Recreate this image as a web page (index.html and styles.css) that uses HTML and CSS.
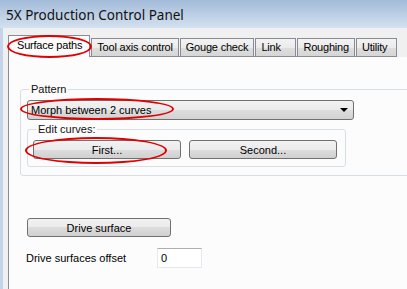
FILE: index.html
```html
<!DOCTYPE html>
<html lang="en">
<head>
  <meta charset="UTF-8">
  <title>5X Production Control Panel</title>
  <link rel="stylesheet" href="styles.css">
</head>
<body>
  <div class="titlebar">5X Production Control Panel</div>

  <div class="window">
    <div class="frame"></div>
    <div class="client">
      <!-- Tabs -->
      <div class="tabs">
        <div class="tab active">Surface paths</div>
        <div class="tab">Tool axis control</div>
        <div class="tab">Gouge check</div>
        <div class="tab">Link</div>
        <div class="tab">Roughing</div>
        <div class="tab">Utility</div>
      </div>

      <div class="panel">
        <fieldset class="group pattern">
          <legend>Pattern</legend>
          <div class="combo">
            <span>Morph between 2 curves</span>
            <span class="arrow"></span>
          </div>
          <fieldset class="group curves">
            <legend>Edit curves:</legend>
            <div class="btn-row">
              <button class="btn">First...</button>
              <button class="btn">Second...</button>
            </div>
          </fieldset>
        </fieldset>

        <button class="btn drive">Drive surface</button>

        <div class="offset-row">
          <label for="offset">Drive surfaces offset</label>
          <input type="text" id="offset" value="0">
        </div>
      </div>
    </div>
  </div>

  <!-- Red marks drawn over the screenshot -->
  <div class="mark mark-tab"></div>
  <div class="mark mark-combo"></div>
  <div class="mark mark-first"></div>
</body>
</html>
```

FILE: styles.css
```css
body {
  margin: 0;
  padding: 0;
  width: 407px;
  height: 289px;
  overflow: hidden;
  position: relative;
  background-color: #f0f0f0;
  font-family: "Liberation Sans", Arial, sans-serif;
  font-size: 11px;
  color: #000;
}
.titlebar {
  height: 28px;
  line-height: 30px;
  padding-left: 6px;
  background: linear-gradient(#a2bbd9, #d4e1ef);
  font-family: "Noto Sans", sans-serif;
  font-size: 13.5px;
  color: #111;
}
.window {
  display: flex;
  height: 261px;
}
.frame {
  width: 3px;
  background-color: #c3d5ea;
}
.client {
  flex: 1;
  min-width: 0;
  display: flex;
  flex-direction: column;
  padding-left: 5px;
}
.tabs {
  display: flex;
  align-items: flex-end;
  gap: 1px;
  height: 28px;
  width: max-content;
  border-bottom: 1px solid #898c95;
}
.tab {
  height: 17px;
  line-height: 17px;
  min-width: 29px;
  padding: 0 5px;
  border: 1px solid #898c95;
  border-bottom: none;
  background: linear-gradient(#f3f3f3 0%, #ebebeb 50%, #dedede 50%, #d6d6d6 100%);
  letter-spacing: -0.2px;
}
.tab.active {
  height: 21px;
  line-height: 19px;
  margin-bottom: -1px;
  padding: 0 7px 0 8px;
  background: #fcfcfc;
  position: relative;
}
.panel {
  flex: 1;
  border-left: 1px solid #898c95;
  background-color: #fcfcfc;
  overflow: hidden;
}
.group {
  border: 1px solid #d5dfe5;
  border-radius: 3px;
  margin: 0;
  min-width: 0;
}
.group legend {
  padding: 0 2px;
  line-height: 13px;
  color: #111;
}
.pattern {
  margin: 26px 0 0 11px;
  width: 378px;
  padding: 4px 6px 8px 6px;
}
.pattern legend {
  margin-left: 2px;
}
.combo {
  width: 322px;
  height: 18px;
  display: flex;
  align-items: center;
  justify-content: space-between;
  padding: 0 0 0 3px;
  border: 1px solid #707070;
  border-radius: 3px;
  background: linear-gradient(#f2f2f2 0%, #ebebeb 50%, #dddddd 50%, #d2d2d2 100%);
}
.arrow {
  width: 0;
  height: 0;
  margin-right: 5px;
  border-left: 4px solid transparent;
  border-right: 4px solid transparent;
  border-top: 4px solid #000;
}
.curves {
  margin-top: 3px;
  width: 307px;
  padding: 4px 5px 7px 5px;
}
.curves legend {
  margin-left: 3px;
}
.btn-row {
  display: flex;
  gap: 8px;
}
.btn {
  height: 19px;
  padding: 0;
  border: 1px solid #707070;
  border-radius: 3px;
  background: linear-gradient(#f2f2f2 0%, #ebebeb 50%, #dddddd 50%, #d0d0d0 100%);
  font-family: "Liberation Sans", Arial, sans-serif;
  font-size: 11px;
  color: #000;
}
.btn-row .btn {
  width: 148px;
}
.drive {
  display: block;
  width: 144px;
  margin: 42px 0 0 18px;
}
.offset-row {
  display: flex;
  align-items: center;
  margin: 11px 0 0 17px;
}
.offset-row label {
  width: 131px;
}
.offset-row input {
  width: 40px;
  height: 18px;
  padding: 0 0 0 3px;
  border: 1px solid #e3e9ef;
  border-top-color: #abadb3;
  background: #fff;
  font-family: "Liberation Sans", Arial, sans-serif;
  font-size: 11px;
}
.mark {
  position: absolute;
  border: 2px solid #e10000;
  border-radius: 50%;
  box-sizing: border-box;
}
.mark-tab {
  left: 7px;
  top: 35px;
  width: 85px;
  height: 23px;
}
.mark-combo {
  left: 20px;
  top: 98px;
  width: 154px;
  height: 22px;
}
.mark-first {
  left: 25px;
  top: 137px;
  width: 142px;
  height: 27px;
}
```
